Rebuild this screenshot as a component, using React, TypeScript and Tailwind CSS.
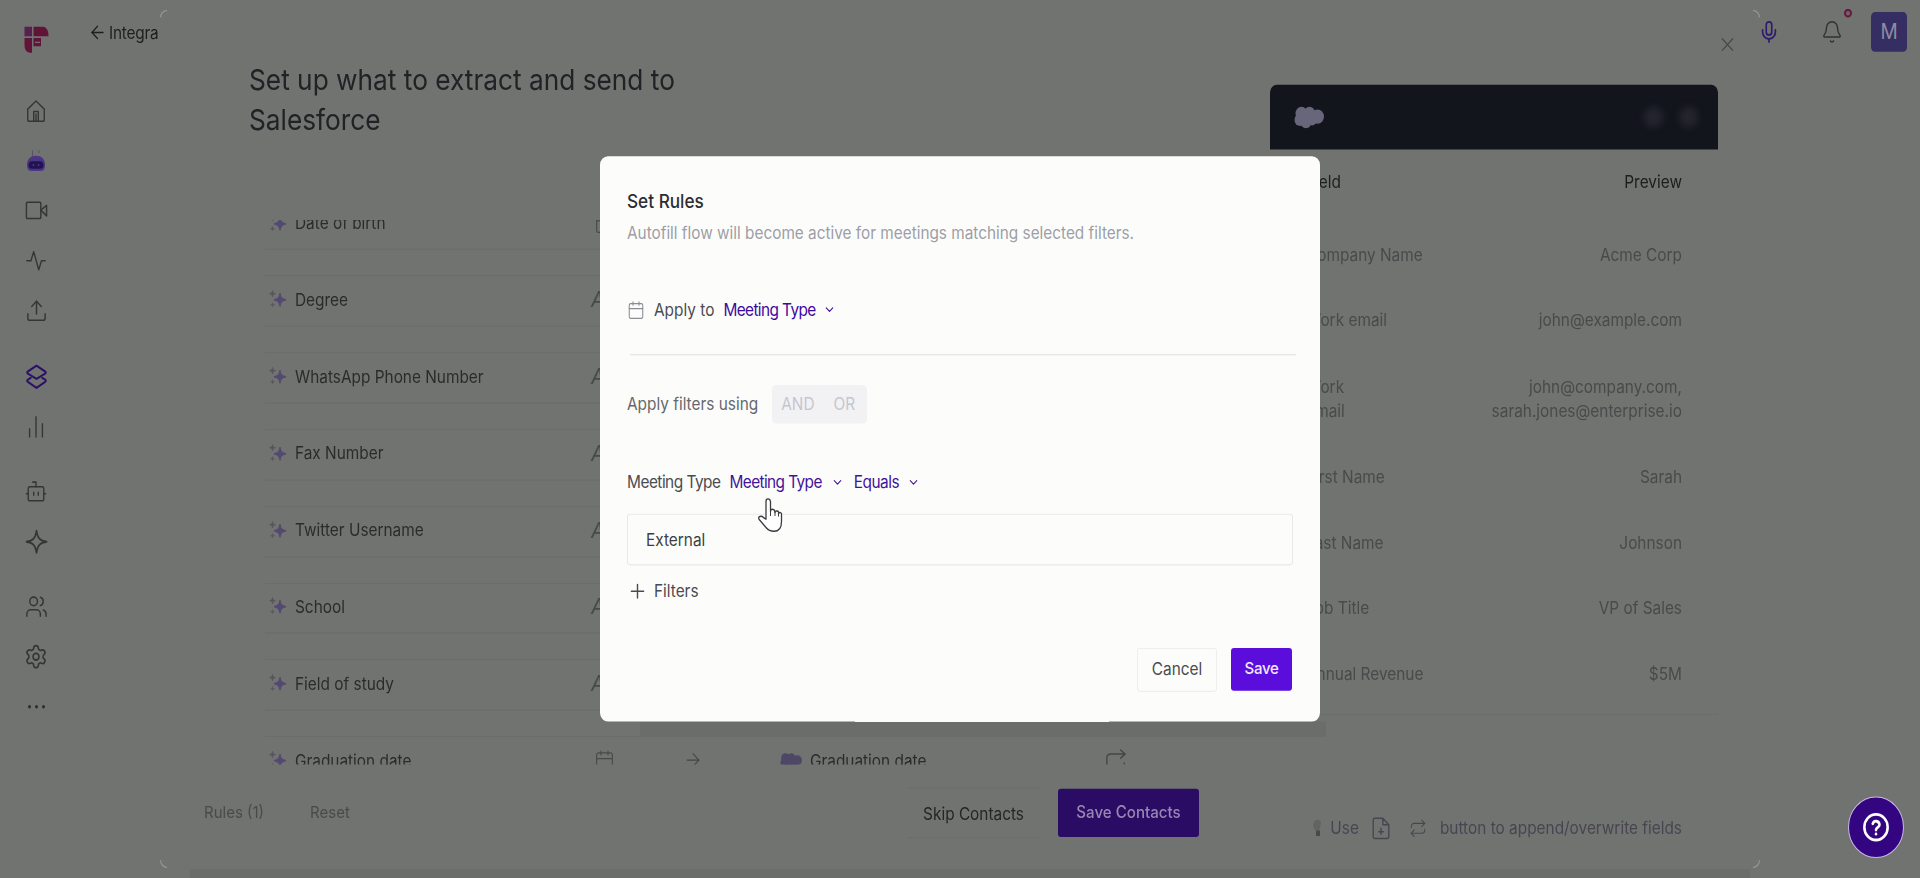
import React from 'react';
import {
    Activity,
    ArrowLeft,
    ArrowRight,
    Bell,
    Calendar,
    ChevronDown,
    Mic,
    Plus,
    Repeat,
    Upload,
    Users,
    Settings,
    Video,
    X,
} from 'lucide-react';

const fields = [
    { name: 'Date of birth', date: true },
    { name: 'Degree' },
    { name: 'WhatsApp Phone Number' },
    { name: 'Fax Number' },
    { name: 'Twitter Username' },
    { name: 'School' },
    { name: 'Field of study' },
    { name: 'Graduation date', date: true },
];

const preview = [
    { label: 'Company Name', value: 'Acme Corp' },
    { label: 'Work email', value: 'john@example.com' },
    { label: 'Work\nEmail', value: 'john@company.com,\nsarah.jones@enterprise.io', tall: true },
    { label: 'First Name', value: 'Sarah' },
    { label: 'Last Name', value: 'Johnson' },
    { label: 'Job Title', value: 'VP of Sales' },
    { label: 'Annual Revenue', value: '$5M' },
];

interface StrokeIconProps {
    children: React.ReactNode;
    className?: string;
    size?: number;
    width?: number;
}

function StrokeIcon({ children, className, size = 22, width = 1.5 }: StrokeIconProps) {
    return (
        <svg width={size} height={size} viewBox="0 0 24 24" fill="none" stroke="currentColor" strokeWidth={width} strokeLinecap="round" strokeLinejoin="round" className={className}>
            {children}
        </svg>
    );
}

function Logo() {
    return (
        <svg width="25" height="25" viewBox="0 0 25 25">
            <path d="M0.500 0H8V9H0.500Z" fill="#56204f" />
            <path d="M9.500 0H18C22 0 24.500 3 24.500 9H9.500Z" fill="#621438" />
            <path d="M0.500 10.500H8V24H6C2.500 24 0.500 21 0.500 17Z" fill="#621438" />
            <path d="M9.500 10.500H17V18H9.500Z" fill="#621438" />
            <path d="M11 14.500H16" stroke="#717370" strokeWidth="1" />
        </svg>
    );
}

function FredBot() {
    return (
        <svg width="20" height="22" viewBox="0 0 20 22">
            <path d="M6.500 6V0.500M13 3V0.500" stroke="#5a565f" strokeWidth="1" />
            <path d="M1 14C1 8.500 4.500 5.500 10 5.500S19 8.500 19 14C19 18 17.500 19.500 14 19.500H6C2.500 19.500 1 18 1 14Z" fill="#4c3585" />
            <rect x="2.500" y="10.500" width="15" height="7" rx="3.500" fill="#21134f" />
            <circle cx="7.500" cy="14" r="1" fill="#4a3a80" />
            <circle cx="12.500" cy="14" r="1" fill="#4a3a80" />
        </svg>
    );
}

function Sparkles() {
    return (
        <svg width="18" height="18" viewBox="0 0 18 18" className="shrink-0">
            <path d="M11 3.500C11.600 7.600 12.800 8.900 17 9.500C12.800 10.100 11.600 11.400 11 15.500C10.400 11.400 9.200 10.100 5 9.500C9.200 8.900 10.400 7.600 11 3.500Z" fill="#544970" stroke="#544970" strokeWidth="1.200" />
            <path d="M3.500 1C3.800 3 4.500 3.600 6.500 4C4.500 4.400 3.800 5 3.500 7C3.200 5 2.500 4.400 0.500 4C2.500 3.600 3.200 3 3.500 1Z" fill="#59545f" stroke="#59545f" strokeWidth="0.600" />
            <path d="M3.500 12C3.700 13.300 4.200 13.800 5.500 14C4.200 14.200 3.700 14.700 3.500 16C3.300 14.700 2.800 14.200 1.500 14C2.800 13.800 3.300 13.300 3.500 12Z" fill="#59545f" stroke="#59545f" strokeWidth="0.400" />
        </svg>
    );
}

function Cloud({ className, width, height }: { className: string; width: number; height: number }) {
    return (
        <svg width={width} height={height} viewBox="0 0 30 21" preserveAspectRatio="none" className={className} fill="currentColor">
            <circle cx="7.500" cy="7" r="6" />
            <circle cx="15.500" cy="6.500" r="5.500" />
            <circle cx="23.500" cy="10" r="6.500" />
            <circle cx="6" cy="13" r="5.500" />
            <circle cx="12" cy="15" r="5.500" />
            <circle cx="18" cy="13" r="5" />
        </svg>
    );
}

function Sidebar() {
    return (
        <aside className="w-[72px] shrink-0 pt-[23.500px] flex flex-col items-center text-[#343636]">
            <Logo />
            <nav className="mt-[30px] flex flex-col gap-[14px]">
                <ul>
                    <li className="h-[45.400px] flex items-center justify-center">
                        <StrokeIcon>
                            <path d="M3 21V10L12 2L21 10V21Q21 22 20 22H4Q3 22 3 21Z" />
                            <path d="M9.500 22V12.500H14.500V22M12 22V15" />
                        </StrokeIcon>
                    </li>
                    <li className="h-[45.400px] flex items-center justify-center"><FredBot /></li>
                    <li className="h-[45.400px] flex items-center justify-center">
                        <StrokeIcon size={23}>
                            <rect x="1.500" y="4" width="15" height="15.500" rx="1" />
                            <path d="M16.500 11.500L22.500 7V17Z" />
                        </StrokeIcon>
                    </li>
                    <li className="h-[45.400px] flex items-center justify-center">
                        <StrokeIcon>
                            <path d="M2 12H6.500L9.500 3L15 21L18 12H22" />
                        </StrokeIcon>
                    </li>
                    <li className="h-[45.400px] flex items-center justify-center"><Upload size={23} strokeWidth={1.5} /></li>
                </ul>
                <ul>
                    <li className="h-[45.400px] flex items-center justify-center text-[#2c1068]">
                        <StrokeIcon width={2} size={23}>
                            <path d="M12 1.500L21 7Q22.500 8 21 9L12 14L3 9Q1.500 8 3 7Z" />
                            <path d="M6 13L3 14.800Q1.500 15.800 3 16.800L12 22.500L21 16.800Q22.500 15.800 21 14.800L18 13" />
                        </StrokeIcon>
                    </li>
                    <li className="h-[45.400px] flex items-center justify-center">
                        <StrokeIcon>
                            <path d="M5 22V14M12 22V2M19 22V9" />
                        </StrokeIcon>
                    </li>
                </ul>
                <ul>
                    <li className="h-[45.400px] flex items-center justify-center">
                        <StrokeIcon>
                            <rect x="3.500" y="7" width="17" height="14" rx="1.500" />
                            <path d="M8.500 2.500H12V7M1.500 14H3.500M20.500 14H22.500M9.500 12.500V15.500M14.500 12.500V15.500" />
                        </StrokeIcon>
                    </li>
                    <li className="h-[45.400px] flex items-center justify-center">
                        <StrokeIcon width={1.7} size={23}>
                            <path d="M12 1.500C13 8.500 15.500 11 22.500 12C15.500 13 13 15.500 12 22.500C11 15.500 8.500 13 1.500 12C8.500 11 11 8.500 12 1.500Z" />
                        </StrokeIcon>
                    </li>
                </ul>
                <ul>
                    <li className="h-[45.400px] flex items-center justify-center"><Users size={23} strokeWidth={1.5} /></li>
                    <li className="h-[45.400px] flex items-center justify-center">
                        <Settings size={24} strokeWidth={1.6} />
                    </li>
                    <li className="h-[45.400px] flex items-center justify-center gap-[4px]">
                        <span className="size-[3px] rounded-full bg-[#2b2d2d]" />
                        <span className="size-[3px] rounded-full bg-[#2b2d2d]" />
                        <span className="size-[3px] rounded-full bg-[#2b2d2d]" />
                    </li>
                </ul>
            </nav>
        </aside>
    );
}

function TopBar() {
    return (
        <header className="flex-1 h-[58.800px] flex items-center justify-between pl-[16px] pr-[13px]">
            <div className="flex items-center gap-[2px] w-[72px] text-[#1d1f20]">
                <ArrowLeft size={19} strokeWidth={1.6} className="shrink-0" />
                <span className="text-[15.400px] tracking-[-0.2px]">Integra</span>
            </div>
            <div className="flex items-center">
                <Mic size={22} strokeWidth={1.8} className="text-[#301a6b]" />
                <div className="relative ml-[41px] text-[#303232]">
                    <Bell size={22} strokeWidth={1.5} />
                    <span className="absolute -top-[10px] left-[23px] size-[8px] rounded-full bg-[#75606c] border-2 border-[#641c3b]" />
                </div>
                <div className="ml-[28px] w-[36px] h-[36px] rounded-[4px] bg-[#352e62] flex items-center justify-center text-[19px] text-[#908ba2]">M</div>
            </div>
        </header>
    );
}

function FieldList() {
    return (
        <div className="mt-[72px] ml-[16px] h-[495.300px] overflow-hidden">
            <div className="-mt-[19px] flex flex-col gap-[23px]">
                {fields.map((field) => (
                    <div key={field.name} className="h-[46.800px] shrink-0 border-y border-[#6b6d6a] flex items-center pl-[4px] pb-[3px]">
                        <Sparkles />
                        <span className="ml-[8px] w-[297px] text-[15.400px] text-[#2a2c2c]">{field.name}</span>
                        <div className="w-[85px] text-[#484a4a] pl-[2px]">
                            {field.date ? <Calendar size={21} strokeWidth={1.3} /> : <span className="text-[20px] italic -ml-[3px]">A</span>}
                        </div>
                        <ArrowRight size={20} strokeWidth={1.3} className="ml-[6px] text-[#444646]" />
                        <Cloud width={22} height={15} className="ml-[77px] text-[#4f4766]" />
                        <span className="ml-[8px] w-[295px] text-[15.400px] text-[#2a2c2c]">{field.name}</span>
                        <StrokeIcon size={22} className="text-[#444646]">
                            <path d="M2 17V10Q2 6 7 6H22M17 2L22 6L17 10" />
                            <path d="M21 15V16" />
                        </StrokeIcon>
                    </div>
                ))}
            </div>
        </div>
    );
}

function PreviewCard() {
    return (
        <section className="w-[448px] mt-[68.400px] text-[15.400px]">
            <div className="h-[59.100px] rounded-t-[7px] bg-[#13151c] flex items-center pl-[24px] pr-[20px]">
                <Cloud width={30} height={21} className="text-[#68667a]" />
                <span className="ml-auto size-[19px] rounded-full bg-[#23242e] blur-[3px]" />
                <span className="ml-[16px] size-[19px] rounded-full bg-[#23252c] blur-[3px]" />
            </div>
            <div className="h-[58.600px] flex items-center justify-between px-[36px] text-[#1b1d1e]">
                <span>Field</span>
                <span>Preview</span>
            </div>
            <div className="pt-[6.600px] pb-[6px] border-b border-dotted border-[#656765] text-[#484a4b]">
                {preview.map((row) => (
                    <div key={row.value} className={`flex items-center justify-between px-[36px] whitespace-pre leading-[22px] ${row.tall ? 'h-[83px]' : 'h-[59.700px]'}`}>
                        <span>{row.label}</span>
                        <span className="text-right">{row.value}</span>
                    </div>
                ))}
            </div>
            <div className="mt-[92px] h-[22px] flex items-center justify-end pr-[36px] text-[#484551]">
                <svg width="10" height="18" viewBox="0 0 10 18">
                    <path d="M2 9Q0 5 3 2Q6 0 9 3Q9 7 7 11H3Z" fill="#626362" />
                    <path d="M4 11H8V16H4Z" fill="#4b464a" />
                </svg>
                <span className="ml-[8px]">Use</span>
                <StrokeIcon size={22} className="ml-[11px]">
                    <path d="M14 2H5Q3.500 2 3.500 3.500V20.500Q3.500 22 5 22H19Q20.500 22 20.500 20.500V8.500ZM14 2V8.500H20.500" />
                    <path d="M12 12V18M9.500 15.500H14.500" />
                </StrokeIcon>
                <Repeat size={18} strokeWidth={1.3} className="ml-[17px]" />
                <span className="ml-[13px]">button to append/overwrite fields</span>
            </div>
        </section>
    );
}

function SetupPanel() {
    return (
        <div className="absolute left-[160px] top-[9px] w-[1600px] h-[780px] flex bg-[#717370]">
            <span className="absolute left-0 top-0 size-[7px] border-t border-l border-[#9a9c99] rounded-tl-[7px]" />
            <span className="absolute right-0 top-0 size-[7px] border-t border-r border-[#9a9c99] rounded-tr-[7px]" />
            <span className="absolute left-0 bottom-0 size-[7px] border-b border-l border-[#9a9c99] rounded-bl-[7px]" />
            <span className="absolute right-0 bottom-0 size-[7px] border-b border-r border-[#9a9c99] rounded-br-[7px]" />
            <X size={21} strokeWidth={1.3} className="absolute left-[1557px] top-[21px] text-[#444646]" />

            <div className="w-[1110px] pt-[45.800px]">
                <div className="pl-[89px]">
                    <h1 className="w-[480px] text-[26.250px] leading-[36.400px] text-[#202326]">Set up what to extract and send to Salesforce</h1>
                    <FieldList />
                </div>
                <div className="mt-[22.200px] h-[44px] flex items-center pl-[44px] pr-[71px] text-[15px] text-[#494b4b]">
                    <button>Rules (1)</button>
                    <button className="ml-[46px]">Reset</button>
                    <button className="ml-auto h-[46px] px-4 border-y border-[#6c6e6b] text-[15.400px] text-[#232526]">Skip Contacts</button>
                    <button className="ml-[18px] h-[44px] w-[141px] rounded-[3px] bg-[#2b0c65] text-[15.100px] text-[#9887b3] font-medium">Save Contacts</button>
                </div>
            </div>

            <PreviewCard />
        </div>
    );
}

function RulesModal() {
    return (
        <div className="absolute left-[600px] top-[141.800px] w-[720px] h-[514.600px] rounded-[8px] bg-[#fcfdfb] pt-[28px] px-[27px] text-[15.400px] text-[#4a4b50]">
            <h2 className="h-[26px] leading-[26px] text-[17.200px] font-medium text-[#2d2e33]">Set Rules</h2>
            <p className="mt-1 h-6 leading-6 text-[15.350px] text-[#9d9ea6]">Autofill flow will become active for meetings matching selected filters.</p>

            <div className="mt-[46px] h-6 flex items-center">
                <Calendar size={18} strokeWidth={1.4} className="text-[#8b8c91]" />
                <span className="ml-[9px]">Apply to</span>
                <button className="ml-[9px] flex items-center gap-[7px] text-[#40079f]">
                    <span className="tracking-[-0.600px]">Meeting Type</span>
                    <ChevronDown size={13} strokeWidth={2} />
                </button>
            </div>

            <hr className="mt-[28px] ml-[3px] -mr-[3px] border-[#dfe0e2]" />

            <div className="mt-[27.600px] h-[35px] flex items-center text-[#66676c]">
                <span>Apply filters using</span>
                <div className="ml-[14px] w-[95px] h-[35px] rounded-[4px] bg-[#f2f2f5] flex items-center pl-[9px] gap-[19px] text-[#c6c6ce]">
                    <span>AND</span>
                    <span>OR</span>
                </div>
            </div>

            <div className="mt-[41.600px] h-6 flex items-center">
                <span className="tracking-[-0.500px]">Meeting Type</span>
                <button className="ml-[9px] flex items-center gap-[9px] text-[#431299]">
                    <span className="tracking-[-0.600px]">Meeting Type</span>
                    <ChevronDown size={13} strokeWidth={2} />
                </button>
                <button className="ml-[10px] flex items-center gap-[8px] text-[#431299]">
                    <span className="tracking-[-0.500px]">Equals</span>
                    <ChevronDown size={13} strokeWidth={2} />
                </button>
            </div>

            <div className="mt-[15.800px] h-[47px] border border-[#e8e9ea] rounded-[3px] pl-[18px] flex items-center text-[#3d3e42]">External</div>

            <button className="mt-[12px] h-6 flex items-center gap-[6px]">
                <Plus size={21} strokeWidth={1.6} />
                Filters
            </button>

            <div className="mt-[38.800px] flex justify-end gap-[14px] pr-[1px]">
                <button className="w-[80px] h-[40px] rounded-[3px] border border-[#eeeeef]">Cancel</button>
                <button className="w-[61px] h-[39px] rounded-[3px] bg-[#5a0ddb] text-[15px] text-[#f0e9fc] font-medium tracking-[-0.300px]">Save</button>
            </div>

            <svg width="26" height="32" viewBox="0 0 26 32" className="absolute left-[157px] top-[310px]">
                <path d="M9 20V4Q9 1.500 11 1.500T13.500 4V13Q13.500 11 15.500 11T18 13V14Q18 12.300 20 12.500T21.500 14.500V15Q22 13.500 23.500 14T24.500 16V22Q24.500 31 17 31Q12 31 9 27.500L2 20Q1 18 3 17.500T6.500 18.500Z" fill="#fff" stroke="#3a3b3e" strokeWidth="1.300" strokeLinejoin="round" />
                <path d="M13.500 12V17M18 13V17M21.500 15V17.500" stroke="#3a3b3e" strokeWidth="1" />
            </svg>
        </div>
    );
}

export default function App() {
    return (
        <div className="h-[878px] overflow-hidden bg-[#717370]">
            <div className="relative w-[1920px] h-[798.200px] origin-top scale-y-110 flex items-start font-['Inter','Liberation_Sans',sans-serif]">
                <Sidebar />
                <TopBar />
                <SetupPanel />
                <div className="absolute left-[640px] top-[656px] w-[686px] h-[14px] bg-[#6b6d6a]" />
                <div className="absolute left-[190px] bottom-0 w-[1560px] h-[8px] bg-[#6b6d6a]" />
                <RulesModal />
                <button className="absolute left-[1848px] top-[723.600px] size-[56px] rounded-full border border-[#c8b8e6] bg-[#330580] text-white flex items-center justify-center">
                    <StrokeIcon size={28} width={2.2}>
                        <circle cx="12" cy="12" r="10" />
                        <path d="M9.200 9.300A3 3 0 0 1 15 10C15 12 12 12.300 12 14.200" />
                        <path d="M12 17.300V17.400" />
                    </StrokeIcon>
                </button>
            </div>
        </div>
    );
}
